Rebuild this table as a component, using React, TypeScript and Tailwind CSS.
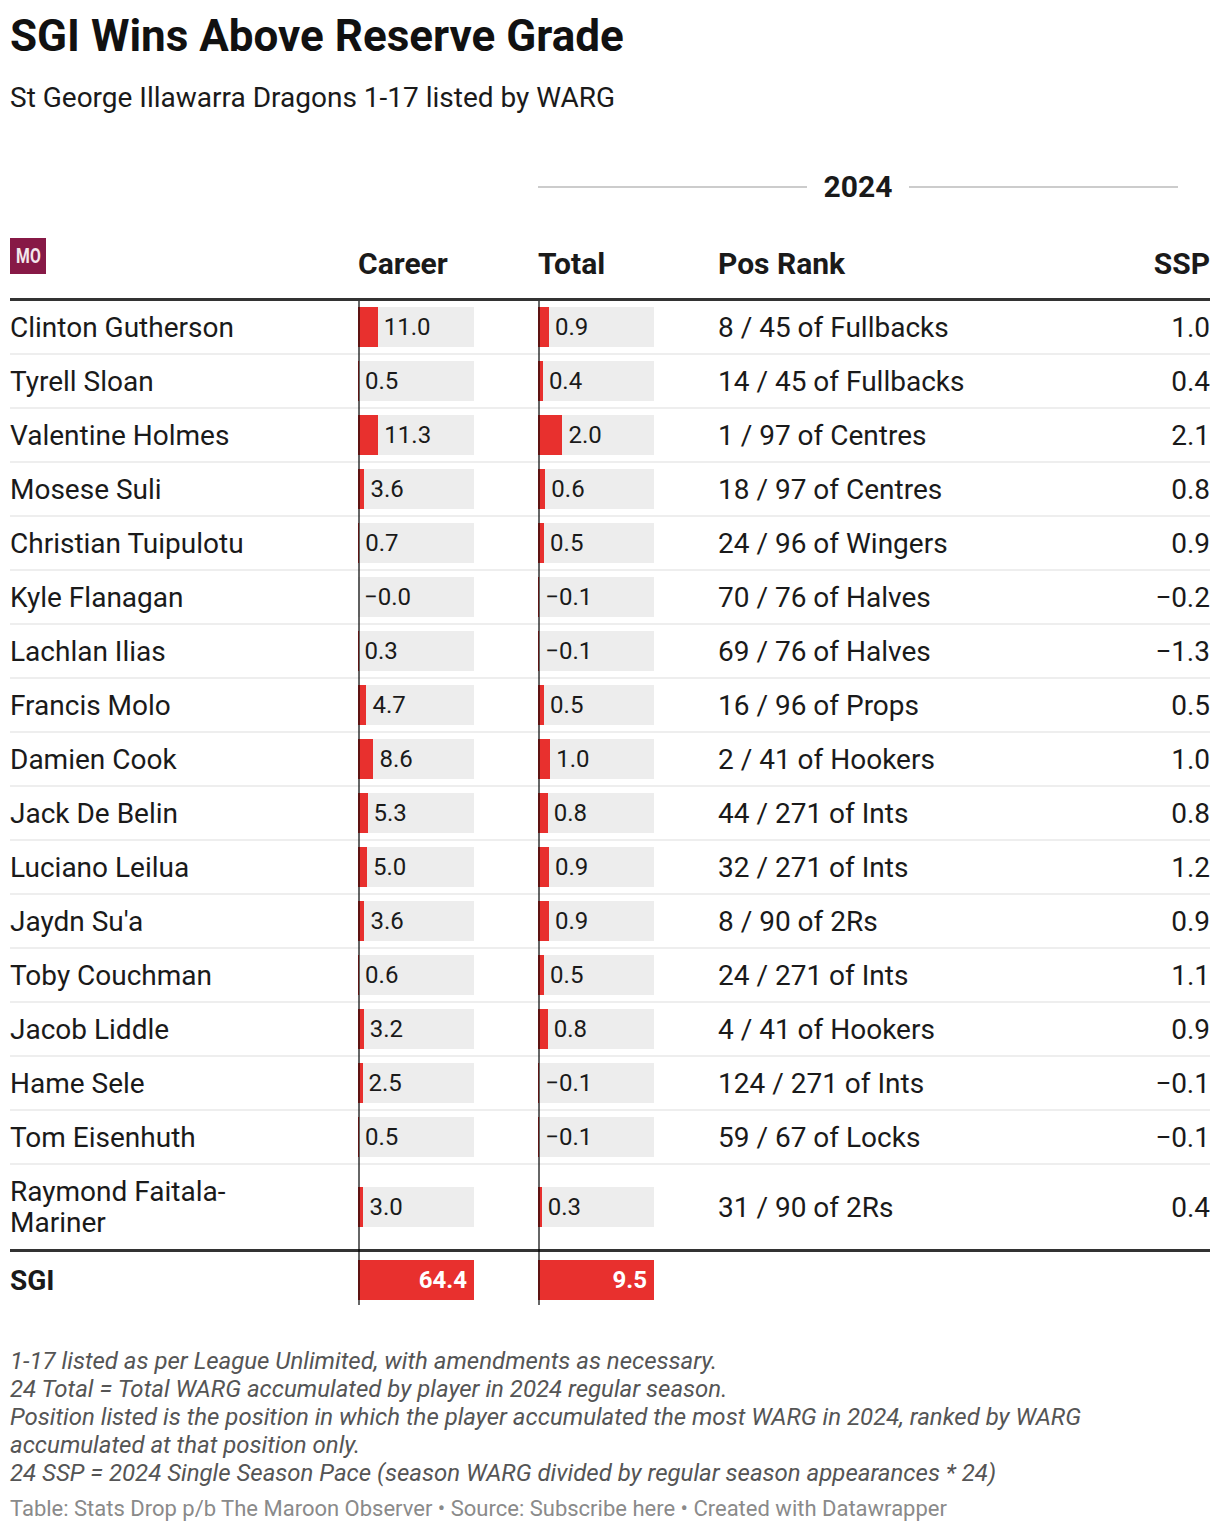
import React from 'react';

type Player = {
  name: string;
  career: number;
  total: number;
  rank: string;
  ssp: string;
};

const players: Player[] = [
  { name: 'Clinton Gutherson', career: 11.0, total: 0.9, rank: '8 / 45 of Fullbacks', ssp: '1.0' },
  { name: 'Tyrell Sloan', career: 0.5, total: 0.4, rank: '14 / 45 of Fullbacks', ssp: '0.4' },
  { name: 'Valentine Holmes', career: 11.3, total: 2.0, rank: '1 / 97 of Centres', ssp: '2.1' },
  { name: 'Mosese Suli', career: 3.6, total: 0.6, rank: '18 / 97 of Centres', ssp: '0.8' },
  { name: 'Christian Tuipulotu', career: 0.7, total: 0.5, rank: '24 / 96 of Wingers', ssp: '0.9' },
  { name: 'Kyle Flanagan', career: -0.0, total: -0.1, rank: '70 / 76 of Halves', ssp: '−0.2' },
  { name: 'Lachlan Ilias', career: 0.3, total: -0.1, rank: '69 / 76 of Halves', ssp: '−1.3' },
  { name: 'Francis Molo', career: 4.7, total: 0.5, rank: '16 / 96 of Props', ssp: '0.5' },
  { name: 'Damien Cook', career: 8.6, total: 1.0, rank: '2 / 41 of Hookers', ssp: '1.0' },
  { name: 'Jack De Belin', career: 5.3, total: 0.8, rank: '44 / 271 of Ints', ssp: '0.8' },
  { name: 'Luciano Leilua', career: 5.0, total: 0.9, rank: '32 / 271 of Ints', ssp: '1.2' },
  { name: "Jaydn Su'a", career: 3.6, total: 0.9, rank: '8 / 90 of 2Rs', ssp: '0.9' },
  { name: 'Toby Couchman', career: 0.6, total: 0.5, rank: '24 / 271 of Ints', ssp: '1.1' },
  { name: 'Jacob Liddle', career: 3.2, total: 0.8, rank: '4 / 41 of Hookers', ssp: '0.9' },
  { name: 'Hame Sele', career: 2.5, total: -0.1, rank: '124 / 271 of Ints', ssp: '−0.1' },
  { name: 'Tom Eisenhuth', career: 0.5, total: -0.1, rank: '59 / 67 of Locks', ssp: '−0.1' },
  { name: 'Raymond Faitala-Mariner', career: 3.0, total: 0.3, rank: '31 / 90 of 2Rs', ssp: '0.4' },
];

const BAR_W = 116;

const fmt = (v: number) => {
  const s = Math.abs(v).toFixed(1);
  return v < 0 || Object.is(v, -0) ? `−${s}` : s;
};

const Bar: React.FC<{ value: number; max: number }> = ({ value, max }) => {
  const w = (Math.abs(value) / max) * BAR_W;
  return (
    <div className="flex h-10 w-[116px] items-center bg-[#ededed]">
      <div className="h-full shrink-0 bg-[#e8302e]" style={{ width: w }} />
      <span className="pl-[6px] text-[24px] leading-none text-[#1a1a1a]">{fmt(value)}</span>
    </div>
  );
};

export default function App() {
  return (
    <div className="min-h-[1532px] w-[1220px] bg-white px-[10px] pt-[10px] font-['Roboto',sans-serif] text-[#1a1a1a]">
      <h1 className="text-[44px] font-bold leading-[52px] text-[#111]">SGI Wins Above Reserve Grade</h1>
      <p className="mt-[22px] text-[28px] leading-[28px]">St George Illawarra Dragons 1-17 listed by WARG</p>

      {/* spanning header */}
      <div className="mt-[57px] flex">
        <div className="w-[528px] shrink-0" />
        <div className="flex w-[640px] items-center">
          <div className="h-[2px] flex-1 bg-[#cccccc]" />
          <span className="px-[17px] text-[30px] font-bold leading-[36px]">2024</span>
          <div className="h-[2px] flex-1 bg-[#cccccc]" />
        </div>
      </div>

      {/* column header */}
      <div className="flex h-[96px] items-end border-b-[3px] border-[#333] pb-[16px] text-[30px] font-bold leading-[36px]">
        <div className="w-[348px] shrink-0 self-end pb-[8px]">
          <div className="flex h-9 w-9 items-center justify-center bg-[#871946]">
            <span className="inline-block scale-x-75 text-[21px] font-bold leading-none text-white/90">MO</span>
          </div>
        </div>
        <div className="w-[180px] shrink-0">Career</div>
        <div className="w-[180px] shrink-0">Total</div>
        <div className="flex-1">Pos Rank</div>
        <div className="text-right">SSP</div>
      </div>

      {/* body */}
      <div className="relative">
        {players.map((p, i) => {
          const last = i === players.length - 1;
          return (
            <div
              key={p.name}
              className={`flex items-center text-[28px] leading-[31px] ${last ? '' : 'border-b-2 border-[#eeeeee]'}`}
            >
              <div className={`w-[348px] shrink-0 ${last ? 'py-[11px]' : 'py-[10px]'}`}>
                <div className="w-[270px]">{p.name}</div>
              </div>
              <div className="w-[180px] shrink-0 py-[6px]">
                <Bar value={p.career} max={64.4} />
              </div>
              <div className="w-[180px] shrink-0 py-[6px]">
                <Bar value={p.total} max={9.5} />
              </div>
              <div className="flex-1">{p.rank}</div>
              <div className="text-right">{p.ssp}</div>
            </div>
          );
        })}

        {/* total row */}
        <div className="flex items-center border-t-[3px] border-[#333] pt-[8px] pb-[5px]">
          <div className="w-[348px] shrink-0 text-[28px] font-bold leading-[31px]">SGI</div>
          <div className="w-[180px] shrink-0">
            <div className="flex h-10 w-[116px] items-center justify-end bg-[#e8302e] pr-[7px] text-[24px] font-bold leading-none text-white">
              64.4
            </div>
          </div>
          <div className="w-[180px] shrink-0">
            <div className="flex h-10 w-[116px] items-center justify-end bg-[#e8302e] pr-[7px] text-[24px] font-bold leading-none text-white">
              9.5
            </div>
          </div>
          <div className="flex-1" />
        </div>

        {/* axis lines */}
        <div className="pointer-events-none absolute top-0 bottom-0 left-[348px] w-[2px] bg-black/60" />
        <div className="pointer-events-none absolute top-0 bottom-0 left-[528px] w-[2px] bg-black/60" />
      </div>

      {/* notes */}
      <div className="mt-[42px] text-[24px] italic leading-[28px] text-[#555]">
        <p>1-17 listed as per League Unlimited, with amendments as necessary.</p>
        <p>24 Total = Total WARG accumulated by player in 2024 regular season.</p>
        <p>
          Position listed is the position in which the player accumulated the most WARG in 2024, ranked by WARG
          accumulated at that position only.
        </p>
        <p>24 SSP = 2024 Single Season Pace (season WARG divided by regular season appearances * 24)</p>
      </div>
      <p className="mt-[8px] text-[22px] leading-[28px] text-[#8a8a8a]">
        Table: Stats Drop p/b The Maroon Observer • Source: Subscribe here • Created with Datawrapper
      </p>
    </div>
  );
}
